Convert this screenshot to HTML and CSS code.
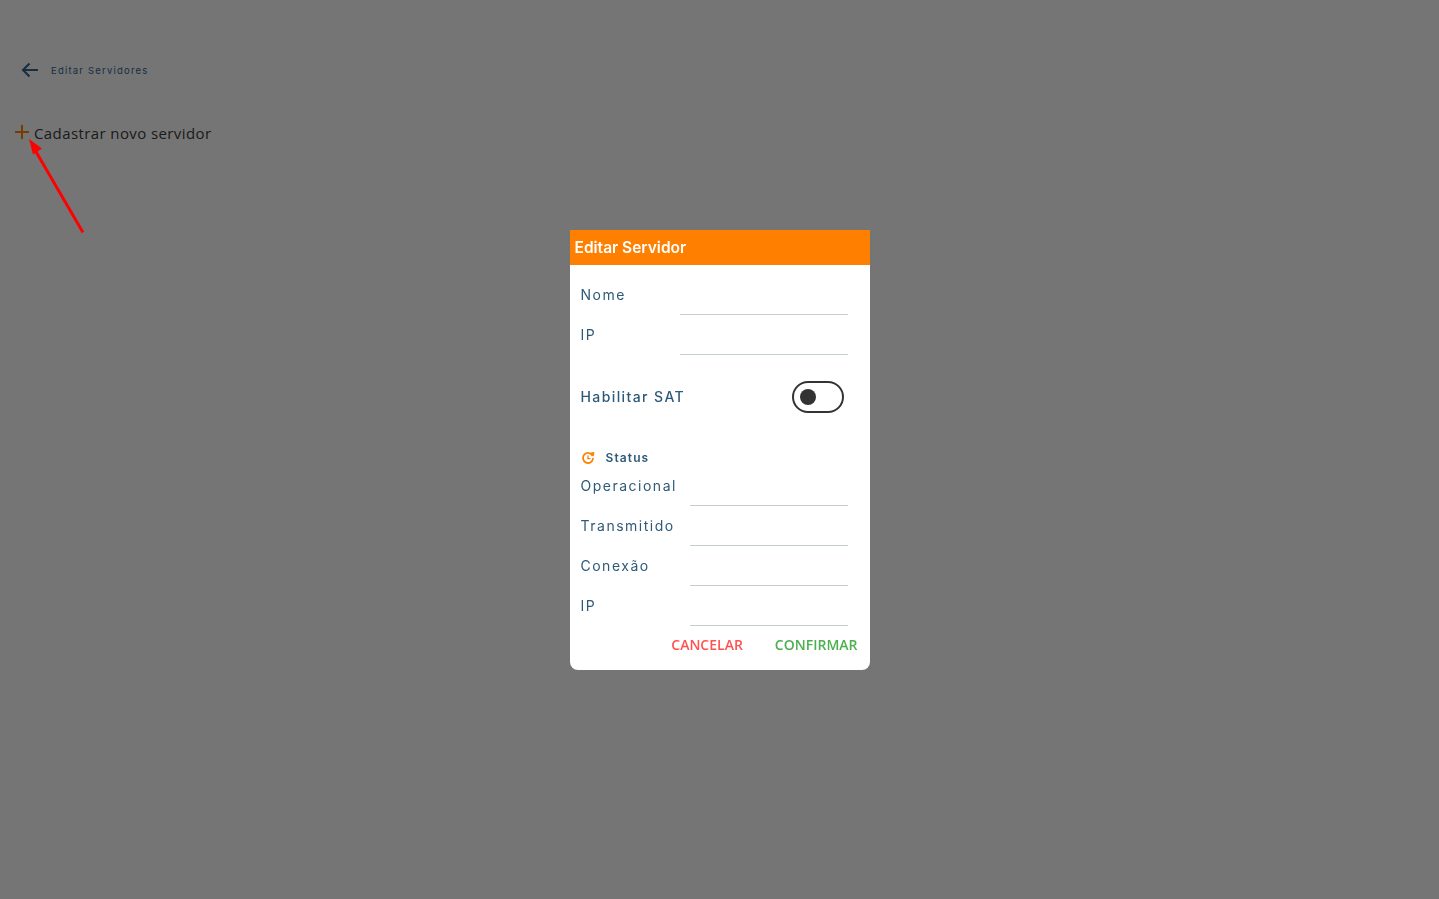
FILE: index.html
```html
<!DOCTYPE html>
<html lang="pt">
<head>
<meta charset="utf-8">
<title>Editar Servidores</title>
<link rel="stylesheet" href="styles.css">
</head>
<body>
<main class="page">
  <header class="topbar">
    <svg class="back" viewBox="0 0 18 16" width="18" height="16"><path d="M17 8H2M8.500 1.500 2 8l6.500 6.500" fill="none" stroke="currentColor" stroke-width="2.200"/></svg>
    <span class="topbar-title">Editar Servidores</span>
  </header>
  <div class="add-row">
    <svg class="plus" viewBox="0 0 14 14" width="14" height="14"><path d="M7 0v14M0 7h14" stroke="currentColor" stroke-width="2"/></svg>
    <span>Cadastrar novo servidor</span>
  </div>
</main>
<div class="overlay">
  <section class="dialog">
    <h2 class="dialog-title">Editar Servidor</h2>
    <div class="dialog-body">
      <div class="field"><label>Nome</label><span class="line"></span></div>
      <div class="field"><label>IP</label><span class="line"></span></div>
      <div class="toggle-row">
        <span class="toggle-label">Habilitar SAT</span>
        <span class="toggle"><span class="knob"></span></span>
      </div>
      <div class="status-head">
        <svg viewBox="0 0 14 14" width="14" height="14"><path d="M11.600 5A5 5 0 1 0 12 7" fill="none" stroke="#ff8000" stroke-width="1.800"/><path d="M9.200 1.600 13.400 1 12.800 5.400Z" fill="#ff8000"/><path d="M7 4.400V7.600H9.400" fill="none" stroke="#ff8000" stroke-width="1.300"/></svg>
        <span>Status</span>
      </div>
      <div class="field wide first"><label>Operacional</label><span class="line"></span></div>
      <div class="field wide"><label>Transmitido</label><span class="line"></span></div>
      <div class="field wide"><label>Conexão</label><span class="line"></span></div>
      <div class="field wide"><label>IP</label><span class="line"></span></div>
      <div class="actions">
        <button class="btn cancel" type="button">CANCELAR</button>
        <button class="btn confirm" type="button">CONFIRMAR</button>
      </div>
    </div>
  </section>
</div>
<svg class="annotation" viewBox="0 0 70 100" width="70" height="100"><path d="M55 93.500 7 11" stroke="#ff0000" stroke-width="3" fill="none"/><path d="M1 0 14 9.500 5 15.500Z" fill="#ff0000"/></svg>
</body>
</html>
```
FILE: styles.css
```css
* { box-sizing: border-box; }
html, body { height: 100%; }
body { margin: 0; background: #fff; font-family: "Inter", "Liberation Sans", sans-serif; overflow: hidden; }
.page { padding: 61px 0 0 21px; }
.topbar { display: flex; align-items: center; height: 18px; color: #38668f; }
.back { flex: none; }
.topbar-title { margin-left: 12px; font-size: 9.500px; letter-spacing: 1.200px; color: #38668f; }
.add-row { display: flex; align-items: center; margin: 43px 0 0 -6px; height: 22px; font-family: "Open Sans", sans-serif; font-size: 15px; color: #3c3c3c; letter-spacing: 0.400px; }
.plus { color: #ff8000; margin: -3px 5px 0 0; flex: none; }
.overlay { position: fixed; inset: 0; background: rgba(0,0,0,.54); display: flex; align-items: center; justify-content: center; }
.dialog { width: 300px; height: 440px; background: #fff; border-radius: 0 0 8px 8px; overflow: hidden; }
.dialog-title { margin: 0; height: 35px; padding: 0 5px; background: #ff8000; color: #fff; font-size: 15.500px; font-weight: 600; line-height: 35px; }
.dialog-body { padding: 10px 12px 0 10px; color: #2e5a78; }
.field { display: flex; height: 40px; align-items: flex-start; }
.field label { width: 100px; flex: none; padding-left: 1px; font-size: 14px; letter-spacing: 1.500px; line-height: 40px; height: 40px; }
.field .line { flex: none; width: 168px; height: 40px; border-bottom: 1px solid #c4cdd1; }
.field.wide label { width: 110px; }
.field.wide .line { width: 158px; }
.toggle-row { display: flex; align-items: center; justify-content: space-between; height: 32px; margin-top: 26px; padding: 0 14px 0 1px; }
.toggle-label { font-size: 14px; font-weight: 500; letter-spacing: 1.400px; }
.toggle { width: 52px; height: 32px; border: 2px solid #333; border-radius: 16px; display: flex; align-items: center; padding-left: 6px; }
.knob { width: 16px; height: 16px; border-radius: 50%; background: #333; }
.status-head { display: flex; align-items: center; margin-top: 35px; height: 20px; font-size: 12px; font-weight: 600; letter-spacing: 1.100px; }
.status-head svg { margin: 0 11px 0 1px; }
.field.first { margin-top: -2px; }
.actions { display: flex; justify-content: flex-end; gap: 32px; height: 38px; align-items: center; }
.btn { border: 0; padding: 0; background: none; font-family: "Open Sans", sans-serif; font-size: 14px; font-weight: 600; }
.cancel { color: #ff5252; }
.confirm { color: #4caf50; }
.annotation { position: fixed; left: 28px; top: 139px; }
```
